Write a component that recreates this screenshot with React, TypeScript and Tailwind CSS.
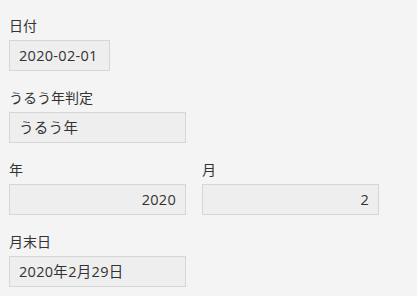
import React from "react";

const font = { fontFamily: '"Open Sans", "Noto Sans CJK JP", sans-serif' };

// Read-only field: label above a grey box
const Field: React.FC<{
  label: string;
  value: string;
  width: string;
  right?: boolean;
}> = ({ label, value, width, right }) => (
  <div className="mb-[17px]">
    <div className="h-[20px] mb-[4px] text-[14px] leading-[20px] text-[#333]">
      {label}
    </div>
    <div
      className={`${width} h-[31px] border border-[#d6d6d6] bg-[#eeeeee] px-[9px] text-[14.5px] tracking-[0.3px] leading-[29px] text-[#333] ${
        right ? "text-right" : ""
      }`}
    >
      {value}
    </div>
  </div>
);

export default function App() {
  return (
    <div
      className="w-[417px] h-[296px] overflow-hidden bg-[#f4f4f4] pt-[16px] pl-[9px]"
      style={font}
    >
      <Field label="日付" value="2020-02-01" width="w-[101px]" />
      <Field label="うるう年判定" value="うるう年" width="w-[177px]" />
      <div className="flex gap-[16px]">
        <Field label="年" value="2020" width="w-[177px]" right />
        <Field label="月" value="2" width="w-[177px]" right />
      </div>
      <Field label="月末日" value="2020年2月29日" width="w-[177px]" />
    </div>
  );
}
